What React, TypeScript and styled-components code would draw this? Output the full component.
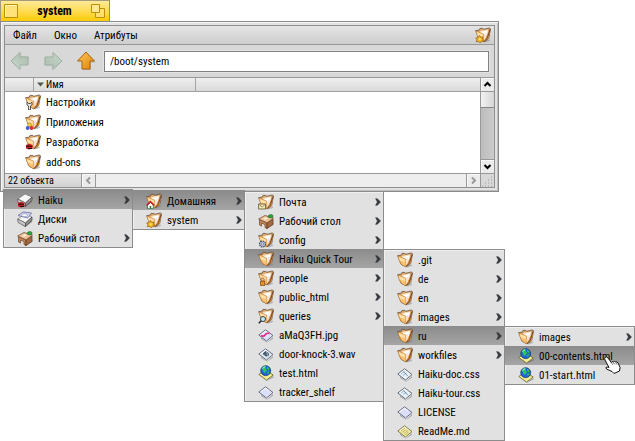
import React from "react";
import styled, { createGlobalStyle, css } from "styled-components";

const GlobalStyle = createGlobalStyle`
  * { box-sizing: border-box; }
  body {
    margin: 0;
    background: #fff;
    color: #000;
    font: 11px/16px "Roboto Condensed", Roboto, "Noto Sans", sans-serif;
  }
  button, input { font: inherit; color: inherit; }
`;

const plainButton = css`
  border: 0;
  padding: 0;
  margin: 0;
  background: none;
`;

const Desktop = styled.main`
  min-height: 100vh;
  padding-right: 136px;
`;

const TitleTab = styled.header`
  display: flex;
  align-items: center;
  justify-content: space-between;
  width: 110px;
  height: 21px;
  padding: 0 4px 0 3px;
  border: 1px solid #a59c7c;
  border-right-color: #8b8b8b;
  border-bottom: 0;
  background: linear-gradient(#ffe998, #ffdc53 50%, #ffcb05);
`;

const Title = styled.h1`
  margin: 0;
  font-size: 12px;
  line-height: 16px;
  font-weight: 700;
`;

const TabButton = styled.button`
  ${plainButton}
  display: flex;
`;

const WindowFrame = styled.section`
  padding: 3px;
  border: 1px solid #8a8a8a;
  background: #e2e2e2;
  box-shadow: inset 1px 1px #f5f5f5, inset -1px -1px #bdbdbd;
`;

const WindowBody = styled.div`
  border: 1px solid #8f8f8f;
  background: #d8d8d8;
`;

const MenuBar = styled.nav`
  display: flex;
  align-items: center;
  height: 19px;
  padding: 0 3px 0 8px;
  gap: 17px;
  border-bottom: 1px solid #989898;
  background: linear-gradient(#e4e4e4, #cecece);
`;

const MenuBarItem = styled.button`
  ${plainButton}
  padding-top: 2px;
`;

const BarIcon = styled.span`
  display: flex;
  margin-left: auto;
`;

const Toolbar = styled.div`
  display: flex;
  align-items: center;
  gap: 13px;
  height: 33px;
  padding: 0 5px;
  border-bottom: 1px solid #989898;
`;

const ToolButton = styled.button`
  ${plainButton}
  display: flex;
`;

const PathInput = styled.input`
  flex: 1;
  min-width: 0;
  height: 21px;
  margin-left: -5px;
  padding: 0 5px;
  border: 1px solid #808080;
  border-radius: 0;
  background: #fff;
  box-shadow: 0 0 0 1px #e3e3e3;
  outline: 0;
`;

const ListArea = styled.div`
  display: flex;
  padding-bottom: 1px;
  background: #fff;
`;

const FileTable = styled.table`
  flex: 1;
  table-layout: fixed;
  border-spacing: 0;
  background: #fff;
`;

const HeadCell = styled.th<{ $width?: number }>`
  width: ${(p) => (p.$width ? `${p.$width}px` : "auto")};
  height: 14px;
  padding: 0 3px;
  border-right: ${(p) => (p.$width ? "1px solid #a3a3a3" : "0")};
  border-bottom: 1px solid #a0a0a0;
  background: linear-gradient(#efefef, #dadada);
  font-size: 10px;
  line-height: 13px;
  font-weight: 400;
  text-align: left;
`;

const SortLabel = styled.button`
  ${plainButton}
  display: flex;
  align-items: center;
  gap: 2px;
  line-height: 13px;
`;

const FileCell = styled.td`
  padding: 0 0 0 20px;
`;

const FileRow = styled.div`
  display: flex;
  align-items: center;
  gap: 5px;
  height: 20px;
`;

const RowLabel = styled.span`
  flex: 1;
  padding-top: 2px;
`;

const VerticalBar = styled.div`
  display: flex;
  flex-direction: column;
  width: 14px;
  margin-bottom: -1px;
  border-left: 1px solid #989898;
  background: linear-gradient(90deg, #bcbcbc, #cccccc);
`;

const ScrollButton = styled.button<{ $edge?: "top" | "bottom" | "left" | "right" }>`
  ${plainButton}
  display: flex;
  align-items: center;
  justify-content: center;
  width: 13px;
  height: 13px;
  flex: none;
  background: #ebebeb;
  box-shadow: inset 1px 1px #fafafa;
  ${(p) => p.$edge && `border-${p.$edge}: 1px solid #989898;`}
  ${(p) => (p.$edge === "top" || p.$edge === "bottom") && "height: 14px;"}
  ${(p) => p.$edge === "left" && "width: 14px;"}
`;

const Thumb = styled.div`
  height: 16px;
  border-bottom: 1px solid #858585;
  background: linear-gradient(90deg, #f2f2f2, #d6d6d6);
`;

const Spacer = styled.div`
  flex: 1;
`;

const StatusRow = styled.footer`
  display: flex;
  height: 14px;
  border-top: 1px solid #989898;
`;

const CountCell = styled.div`
  position: relative;
  width: 77px;
  border-right: 1px solid #989898;
  background: linear-gradient(#e4e4e4, #d2d2d2);
`;

const CountButton = styled.button`
  ${plainButton}
  display: block;
  padding-left: 3px;
  font-size: 10px;
  line-height: 14px;
`;

const HorizontalTrack = styled.div`
  flex: 1;
  background: #eeeeee;
  border-left: 1px solid #989898;
`;

const Grip = styled.div`
  display: flex;
  width: 14px;
  border-left: 1px solid #989898;
`;

const Menu = styled.ul<{ $width: number; $root?: boolean }>`
  position: absolute;
  z-index: 1;
  top: ${(p) => (p.$root ? "15px" : "0")};
  left: ${(p) => (p.$root ? "-2px" : "100%")};
  width: ${(p) => p.$width}px;
  margin: 0;
  padding: 0;
  list-style: none;
  border: 1px solid #8c8c8c;
  background: #e1e1e1;
  box-shadow: inset 1px 1px #f0f0f0;
`;

const MenuItem = styled.li`
  position: relative;
`;

const MenuRow = styled.button<{ $open?: boolean }>`
  ${plainButton}
  display: flex;
  align-items: center;
  width: 100%;
  height: 19px;
  padding: 0 2px 0 13px;
  gap: 5px;
  text-align: left;
  white-space: nowrap;
  background: ${(p) => (p.$open ? "linear-gradient(#8b8b8b, #a5a5a5)" : "none")};
`;

const Pointer = styled.svg`
  position: absolute;
  z-index: 2;
  right: 12px;
  top: 10px;
`;

type IconKind =
  | "folder" | "settings" | "apps" | "develop" | "home" | "gear" | "mail" | "config"
  | "people" | "query" | "drive" | "disks" | "desk" | "file" | "image" | "sound"
  | "html" | "css" | "text";

const Folder = () => (
  <>
    <path d="M10 13.500l4.500-1 .8 1.200-5 1.800z" fill="#777" opacity=".45" />
    <path d="M.7 3.600l3.400-.4 1-1.900 2.800.2.900.8L14.500.9l1 1.200-1.800 9.500-4.700 3.300L4 12.300z" fill="#d9a468" stroke="#5c4536" strokeWidth=".7" />
    <path d="M4.500 4.200L8 3.300l5-.9-1.200 6.500L9.500 13z" fill="#f7ddba" />
    <path d="M6 5l6.800-1.800-.7 4.700-2.600 5z" fill="#fff" />
    <path d="M9.500 7l2.200-1.400-.4 3.200-1.600 2.600z" fill="#ece4e8" />
    <path d="M.8 4l7.900 3 .4 7.900-4.900-2.700Q2 8.500.8 4z" fill="#fac271" stroke="#b87733" strokeWidth=".5" />
    <path d="M1.800 5l5.900 2.500.2 2.500-5-1.500z" fill="#ffe1a9" />
    <path d="M9.100 14.800Q10.800 11.800 11 9.500 12.600 6.500 15.200 2.500l-1.700 9z" fill="#e99843" />
    <path d="M9.200 14.700Q13.500 11 13.700 6.500L15.200 2.300" fill="none" stroke="#5b3826" strokeWidth=".9" />
  </>
);

const Sheet = ({ fill = "#dcdffa", edge = "#5d6078" }: { fill?: string; edge?: string }) => (
  <>
    <path d="M3 10.500l6 5 6-5.500v1.800l-6 4L3 12z" fill="#777" opacity=".55" />
    <path d="M.8 8L7.500 2.800 15 8.500 8.500 14z" fill={fill} stroke={edge} strokeWidth=".9" strokeLinejoin="round" />
    <path d="M2.500 8l5-3.900 4 3" fill="none" stroke="#fff" strokeWidth=".9" />
  </>
);

const Drive = ({ y = 0 }: { y?: number }) => (
  <g transform={`translate(0 ${y})`}>
    <path d="M5 13l10-6v3l-7 5z" fill="#666" opacity=".5" />
    <path d="M.8 7L8 2l7 3-6.500 6z" fill="#f5f5f5" stroke="#777" strokeWidth=".7" />
    <path d="M.8 7l7.700 4v3.500L1 10.500z" fill="#c8c8c8" stroke="#555" strokeWidth=".7" />
    <path d="M8.500 11L15 5v3.500l-6.500 6z" fill="#8d8d8d" stroke="#444" strokeWidth=".7" />
  </g>
);

const overlays: Partial<Record<IconKind, React.ReactNode>> = {
  settings: <path d="M2 8v3l1.500 1v4h2v-4L7 11V8L5.500 9.500h-2z" fill="#e8e8e8" stroke="#333" strokeWidth=".8" />,
  apps: (
    <>
      <circle cx="4.500" cy="11" r="2" fill="#f5cf3a" stroke="#7c6114" strokeWidth=".4" />
      <circle cx="2.700" cy="14" r="1.900" fill="#3e58e0" />
      <circle cx="6.500" cy="14" r="1.900" fill="#db2f35" />
    </>
  ),
  develop: (
    <>
      <path d="M1 11l3-1.200L7.500 11v3.600l-3.500 1-3-1z" fill="#c91f20" />
      <path d="M1 12.200h6.500M3 14.500h4" stroke="#210b0b" />
    </>
  ),
  home: (
    <>
      <path d="M1.500 12v3.700h5.800V12L4.400 9.500z" fill="#fff" stroke="#29743b" strokeWidth=".8" />
      <path d="M.6 12.500l3.800-4 3.800 4" fill="none" stroke="#c8182a" strokeWidth="1.500" />
      <path d="M3.700 13h1.500v2.700H3.700z" fill="#2c7336" />
    </>
  ),
  gear: (
    <>
      <path d="M4.500 8.500l1.200 1.800 2.300-.3-.5 2 1.300 1.700-2.200.4L5.300 16l-1.600-1.500-2.500.2.800-2L.7 11l2.300-.3z" fill="#f6b921" stroke="#8b5a0a" strokeWidth=".7" />
      <circle cx="4.700" cy="12.300" r="1" fill="#ffe36e" />
    </>
  ),
  mail: (
    <>
      <path d="M.6 10h7v5H.6z" fill="#f3e8b5" stroke="#5d5128" strokeWidth=".8" />
      <path d="M1 10.500l3.100 2.500 3.100-2.500" fill="none" stroke="#83733c" strokeWidth=".7" />
    </>
  ),
  config: (
    <>
      <circle cx="4.500" cy="12" r="3" fill="#bac6dc" stroke="#3d485d" strokeWidth="1.200" strokeDasharray="1.600 .7" />
      <circle cx="4.500" cy="12" r="1.200" fill="#f4f4f4" stroke="#4b586d" strokeWidth=".6" />
    </>
  ),
  people: (
    <>
      <path d="M2.500 11h4.200v4.600H2.500z" fill="#ee8f21" stroke="#79420b" strokeWidth=".7" />
      <circle cx="4.600" cy="9.500" r="1.600" fill="#f4bf85" stroke="#71401c" strokeWidth=".6" />
    </>
  ),
  query: (
    <>
      <circle cx="5" cy="11" r="2.500" fill="#c7edf3" stroke="#34464b" />
      <path d="M3.200 12.800l-2.400 2.500" stroke="#222" strokeWidth="1.500" />
    </>
  ),
};

const drawings: Partial<Record<IconKind, React.ReactNode>> = {
  drive: (
    <>
      <Drive />
      <path d="M1 11l3-1.200L7.500 11v3.600l-3.500 1-3-1z" fill="#cb1d20" />
      <path d="M1.500 12.200H7M3 14.400h4" stroke="#240909" />
    </>
  ),
  disks: (
    <>
      <Drive y={1} />
      <path d="M1 4.500L6 1l8.500 1-3.700 5z" fill="#d4d8f6" stroke="#656b99" strokeWidth=".8" />
      <ellipse cx="7.500" cy="4.200" rx="3" ry="1.400" fill="#fff" stroke="#8085ad" strokeWidth=".6" />
    </>
  ),
  desk: (
    <>
      <path d="M7 14l8-4 .8 1-7.300 5z" fill="#555" opacity=".5" />
      <path d="M1.500 7l7.500 3v5.500l-2-1v-3l-3.500-1.400v3L1.500 12z" fill="#c98b57" stroke="#6b432a" strokeWidth=".7" />
      <path d="M9 10l6-3.800v5.300l-6 4z" fill="#a36a42" stroke="#5a3521" strokeWidth=".7" />
      <path d="M.6 6L7 2.500l8.500 2.600L9 9.800z" fill="#edc397" stroke="#7c5236" strokeWidth=".8" />
      <path d="M5 5.700l3-1.500 2 .8-3 1.800z" fill="#fff3e1" />
      <path d="M10 4c0-3 5-3 5-1 0 2-2 2.500-5 1z" fill="#28a83c" stroke="#155b24" strokeWidth=".5" />
    </>
  ),
  file: <Sheet />,
  image: (
    <>
      <Sheet />
      <path d="M3 8.500q2.500 1.500 4-.6t4.500-1.500" stroke="#e02882" strokeWidth="1.700" fill="none" />
    </>
  ),
  sound: (
    <>
      <Sheet fill="#dbe5ef" />
      <path d="M5 7.800l3-2.500.5 5zM9.500 6.200q2 1.500.3 4" fill="#4e6379" stroke="#32465a" strokeWidth=".8" />
    </>
  ),
  html: (
    <>
      <path d="M3 12l5.500 3.800L15.500 11v1.200l-7 3.800z" fill="#555" opacity=".6" />
      <path d="M.8 9.500L7.500 5l7.700 5-6.700 5z" fill="#f5ec98" stroke="#75702e" strokeWidth=".9" />
      <circle cx="7.700" cy="5.700" r="5" fill="#1f67d2" stroke="#123768" strokeWidth=".7" />
      <path d="M4 3q2-2.500 4-2l-.5 2.300L9 5 7 8 5.500 6.800zM9 1.500l2.500 2-1 1.500L9 3.500zM9 7l2.500-.8-1.500 3z" fill="#31c554" />
      <path d="M4.500 3.700q1-1.800 2.500-1.900" stroke="#b8fff2" strokeWidth=".9" fill="none" />
    </>
  ),
  css: (
    <>
      <Sheet fill="#e6f0f8" edge="#56606a" />
      <path d="M4 8l3.500-2.600M6 9.500L9.500 7" stroke="#8aa8c4" strokeWidth=".8" />
      <path d="M6.500 5.500l4.500 4.800" stroke="#53687c" strokeWidth=".7" />
    </>
  ),
  text: (
    <>
      <Sheet fill="#f3eb9e" edge="#77723c" />
      <path d="M4 8l4-3M5.500 9.200l4-3M7 10.500l4-3M8.300 11.700l3.500-2.800" stroke="#999152" strokeWidth=".8" strokeDasharray="1.500 .5" />
    </>
  ),
};

const Icon = ({ kind }: { kind: IconKind }) => (
  <svg width="16" height="16" viewBox="0 0 16 16" aria-hidden="true">
    {drawings[kind] ?? (
      <>
        <Folder />
        {overlays[kind]}
      </>
    )}
  </svg>
);

const Chevron = () => (
  <svg width="6" height="8" viewBox="0 0 6 8" aria-hidden="true">
    <path d="M.5.600l2 .2L5.600 4 2.500 7.200l-2 .2L2.300 4z" fill="#36393d" stroke="#36393d" strokeWidth=".4" />
  </svg>
);

const scrollPaths = {
  up: "M1.500 6L4.500 3l3 3",
  down: "M1.500 3l3 3 3-3",
  left: "M6 1.500l-3 3 3 3",
  right: "M3 1.500l3 3-3 3",
};

const ScrollArrow = ({ dir, color = "#000" }: { dir: keyof typeof scrollPaths; color?: string }) => (
  <svg width="9" height="9" viewBox="0 0 9 9" aria-hidden="true">
    <path d={scrollPaths[dir]} fill="none" stroke={color} strokeWidth="2" />
  </svg>
);

const NavArrow = ({ dir }: { dir: "left" | "right" | "up" }) => {
  const turn = { up: 0, left: -90, right: 90 }[dir];
  const active = dir === "up";
  return (
    <svg width="20" height="20" viewBox="0 0 20 20" aria-hidden="true">
      <defs>
        <linearGradient id={`nav-${dir}`} x1="0" y1="0" x2="1" y2="1">
          <stop offset="0" stopColor={active ? "#ffc65a" : "#c8d6cb"} />
          <stop offset="1" stopColor={active ? "#dc8206" : "#a9bdae"} />
        </linearGradient>
      </defs>
      <g transform={`rotate(${turn} 10 10)`}>
        <path d="M11 2l8.500 9.500H15V19H7v-2z" fill="#777" opacity={active ? ".35" : ".12"} />
        <path d="M10 1l8.500 9H14v8H6v-8H1.500z" fill={`url(#nav-${dir})`} stroke={active ? "#a8640e" : "#9cb0a1"} />
      </g>
    </svg>
  );
};

interface Entry {
  label: string;
  icon: IconKind;
  more?: boolean;
  submenu?: { width: number; items: Entry[] };
  hovered?: boolean;
}

const tourPages: Entry[] = [
  { label: "images", icon: "folder", more: true },
  { label: "00-contents.html", icon: "html", hovered: true },
  { label: "01-start.html", icon: "html" },
];

const tourItems: Entry[] = [
  { label: ".git", icon: "folder", more: true },
  { label: "de", icon: "folder", more: true },
  { label: "en", icon: "folder", more: true },
  { label: "images", icon: "folder", more: true },
  { label: "ru", icon: "folder", more: true, submenu: { width: 131, items: tourPages } },
  { label: "workfiles", icon: "folder", more: true },
  { label: "Haiku-doc.css", icon: "css" },
  { label: "Haiku-tour.css", icon: "css" },
  { label: "LICENSE", icon: "file" },
  { label: "ReadMe.md", icon: "text" },
];

const homeItems: Entry[] = [
  { label: "Почта", icon: "mail", more: true },
  { label: "Рабочий стол", icon: "desk", more: true },
  { label: "config", icon: "config", more: true },
  { label: "Haiku Quick Tour", icon: "folder", more: true, submenu: { width: 122, items: tourItems } },
  { label: "people", icon: "people", more: true },
  { label: "public_html", icon: "folder", more: true },
  { label: "queries", icon: "query", more: true },
  { label: "aMaQ3FH.jpg", icon: "image" },
  { label: "door-knock-3.wav", icon: "sound" },
  { label: "test.html", icon: "html" },
  { label: "tracker_shelf", icon: "file" },
];

const volumeItems: Entry[] = [
  { label: "Домашняя", icon: "home", more: true, submenu: { width: 140, items: homeItems } },
  { label: "system", icon: "gear", more: true },
];

const rootItems: Entry[] = [
  { label: "Haiku", icon: "drive", more: true, submenu: { width: 113, items: volumeItems } },
  { label: "Диски", icon: "disks" },
  { label: "Рабочий стол", icon: "desk", more: true },
];

const files: Entry[] = [
  { label: "Настройки", icon: "settings" },
  { label: "Приложения", icon: "apps" },
  { label: "Разработка", icon: "develop" },
  { label: "add-ons", icon: "folder" },
];

const PopupMenu = ({ items, width, root }: { items: Entry[]; width: number; root?: boolean }) => (
  <Menu $width={width} $root={root}>
    {items.map((item) => (
      <MenuItem key={item.label}>
        <MenuRow $open={item.hovered || !!item.submenu}>
          <Icon kind={item.icon} />
          <RowLabel>{item.label}</RowLabel>
          {item.more && <Chevron />}
        </MenuRow>
        {item.submenu && <PopupMenu {...item.submenu} />}
        {item.hovered && (
          <Pointer width="18" height="18" viewBox="0 0 18 18" aria-hidden="true">
            <path
              d="M1 1.500Q2.500 0 4 2l3.300 4.500Q8 5 9.300 6q1.200-1.200 2.300 0 1.700-.7 2.500 1l2 4.500-.6 3.500L10 17.500l-2-2-5.500-2.500Q1 11 3 11l2 .5L1 4Q.3 2.500 1 1.500z"
              fill="#fff" stroke="#111" strokeLinejoin="round"
            />
            <path d="M7.300 6.500l1.500 2.300M9.500 6.500l1.300 2M11.800 6.500l1.200 2" stroke="#333" strokeWidth=".7" />
          </Pointer>
        )}
      </MenuItem>
    ))}
  </Menu>
);

export default function App() {
  return (
    <Desktop>
      <GlobalStyle />
      <TitleTab>
        <TabButton aria-label="Close">
          <svg width="14" height="14" viewBox="0 0 14 14">
            <path d="M.5.500h13v13H.5z" fill="#ffe27a" stroke="#bd900b" />
            <path d="M1.500 12.500v-11h11" fill="none" stroke="#fff4bd" />
          </svg>
        </TabButton>
        <Title>system</Title>
        <TabButton aria-label="Zoom">
          <svg width="14" height="14" viewBox="0 0 14 14">
            <path d="M4.500 4.500h9v9h-9z" fill="#ffe06c" stroke="#bd900b" />
            <path d="M.5.500h8v8h-8z" fill="#ffe891" stroke="#bd900b" />
          </svg>
        </TabButton>
      </TitleTab>
      <WindowFrame>
        <WindowBody>
          <MenuBar>
            <MenuBarItem>Файл</MenuBarItem>
            <MenuBarItem>Окно</MenuBarItem>
            <MenuBarItem>Атрибуты</MenuBarItem>
            <BarIcon><Icon kind="gear" /></BarIcon>
          </MenuBar>
          <Toolbar>
            <ToolButton aria-label="Back"><NavArrow dir="left" /></ToolButton>
            <ToolButton aria-label="Forward"><NavArrow dir="right" /></ToolButton>
            <ToolButton aria-label="Up"><NavArrow dir="up" /></ToolButton>
            <PathInput aria-label="Path" defaultValue="/boot/system" />
          </Toolbar>
          <ListArea>
            <FileTable>
              <thead>
                <tr>
                  <HeadCell $width={29} />
                  <HeadCell $width={162}>
                    <SortLabel>
                      <svg width="7" height="5" viewBox="0 0 7 5"><path d="M0 .5h7L3.500 4.500z" fill="#555" /></svg>
                      Имя
                    </SortLabel>
                  </HeadCell>
                  <HeadCell />
                </tr>
              </thead>
              <tbody>
                {files.map((file) => (
                  <tr key={file.label}>
                    <FileCell colSpan={3}>
                      <FileRow>
                        <Icon kind={file.icon} />
                        <RowLabel>{file.label}</RowLabel>
                      </FileRow>
                    </FileCell>
                  </tr>
                ))}
              </tbody>
            </FileTable>
            <VerticalBar>
              <ScrollButton $edge="bottom" aria-label="Scroll up"><ScrollArrow dir="up" /></ScrollButton>
              <Thumb />
              <Spacer />
              <ScrollButton $edge="top" aria-label="Scroll down"><ScrollArrow dir="down" /></ScrollButton>
            </VerticalBar>
          </ListArea>
          <StatusRow>
            <CountCell>
              <CountButton>22 объекта</CountButton>
              <PopupMenu root width={130} items={rootItems} />
            </CountCell>
            <ScrollButton aria-label="Scroll left"><ScrollArrow dir="left" color="#999" /></ScrollButton>
            <HorizontalTrack />
            <ScrollButton $edge="left" aria-label="Scroll right"><ScrollArrow dir="right" color="#999" /></ScrollButton>
            <Grip>
              <svg width="13" height="13" viewBox="0 0 13 13" aria-hidden="true">
                <path d="M10 3h1M7 6h1m2 0h1M4 9h1m2 0h1m2 0h1M1 12h1m2 0h1m2 0h1m2 0h1" stroke="#999" />
              </svg>
            </Grip>
          </StatusRow>
        </WindowBody>
      </WindowFrame>
    </Desktop>
  );
}
